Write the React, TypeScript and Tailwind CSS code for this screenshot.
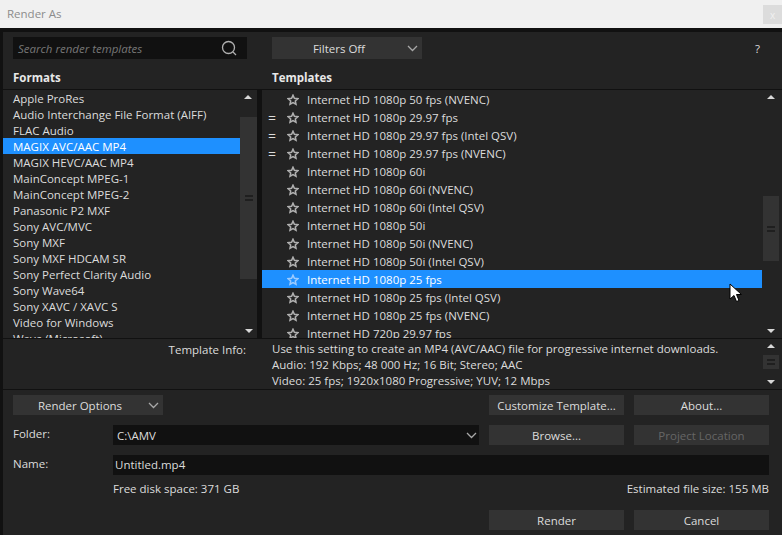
import React from 'react'

const formats = [
  'Apple ProRes',
  'Audio Interchange File Format (AIFF)',
  'FLAC Audio',
  'MAGIX AVC/AAC MP4',
  'MAGIX HEVC/AAC MP4',
  'MainConcept MPEG-1',
  'MainConcept MPEG-2',
  'Panasonic P2 MXF',
  'Sony AVC/MVC',
  'Sony MXF',
  'Sony MXF HDCAM SR',
  'Sony Perfect Clarity Audio',
  'Sony Wave64',
  'Sony XAVC / XAVC S',
  'Video for Windows',
  'Wave (Microsoft)',
]

const templates = [
  { name: 'Internet HD 1080p 50 fps (NVENC)' },
  { name: 'Internet HD 1080p 29.97 fps', eq: true },
  { name: 'Internet HD 1080p 29.97 fps (Intel QSV)', eq: true },
  { name: 'Internet HD 1080p 29.97 fps (NVENC)', eq: true },
  { name: 'Internet HD 1080p 60i' },
  { name: 'Internet HD 1080p 60i (NVENC)' },
  { name: 'Internet HD 1080p 60i (Intel QSV)' },
  { name: 'Internet HD 1080p 50i' },
  { name: 'Internet HD 1080p 50i (NVENC)' },
  { name: 'Internet HD 1080p 50i (Intel QSV)' },
  { name: 'Internet HD 1080p 25 fps', selected: true },
  { name: 'Internet HD 1080p 25 fps (Intel QSV)' },
  { name: 'Internet HD 1080p 25 fps (NVENC)' },
  { name: 'Internet HD 720p 29.97 fps' },
]

const Chevron = () => (
  <svg width="11" height="7" viewBox="0 0 11 7" fill="none" stroke="#a8a8a8" strokeWidth="1.3">
    <path d="M1 1l4.5 4.5L10 1" />
  </svg>
)

const Star = ({ color }: { color: string }) => (
  <svg width="12" height="12" viewBox="0 0 12 12" fill="none" stroke={color} strokeWidth="1.5">
    <path d="M6 1.2l1.4 3.1 3.4.4-2.5 2.2.7 3.3L6 8.5l-3 1.7.7-3.3-2.5-2.2 3.4-.4z" />
  </svg>
)

const Up = () => <div className="w-0 h-0 border-x-[4px] border-x-transparent border-b-[4px] border-b-[#d8d8d8]" />
const Down = () => <div className="w-0 h-0 border-x-[4px] border-x-transparent border-t-[4px] border-t-[#d8d8d8]" />

const Grip = () => (
  <div className="flex flex-col gap-[2px]">
    <div className="w-2 h-[2px] bg-[#1f1f1f]" />
    <div className="w-2 h-[2px] bg-[#1f1f1f]" />
  </div>
)

const Button = ({ label, disabled }: { label: string; disabled?: boolean }) => (
  <div
    className={`w-[135px] h-5 bg-[#333333] flex items-center justify-center pt-px ${disabled ? 'text-[#666666]' : 'text-[#dcdcdc]'}`}
  >
    {label}
  </div>
)

const Dropdown = ({ label }: { label: string }) => (
  <div className="w-[150px] h-5 bg-[#333333] flex items-center text-[#dcdcdc]">
    <span className="flex-1 text-center pr-px pt-px">{label}</span>
    <span className="mr-[4px] flex"><Chevron /></span>
  </div>
)

export default function App() {
  return (
    <div className="w-[782px] h-[535px] overflow-hidden flex flex-col bg-[#232323] text-[11.5px] leading-4 text-[#dcdcdc] font-['Open_Sans','Noto_Sans',sans-serif]">
      <div className="h-7 bg-[#f0f0f0] flex justify-between shrink-0">
        <span className="ml-[7px] mt-[6px] text-[#8c8c8c]">Render As</span>
        <div className="w-[19px] h-[19px] mt-[5px] bg-[#dcdcdc] text-[#f0f0f0] flex items-center justify-center text-[10px]">x</div>
      </div>
      <div className="flex-1 flex flex-col border-t-4 border-l-[3px] border-[#111111] min-h-0">
        <div className="h-[57px] shrink-0 flex flex-col">
          <div className="flex items-center mt-[5px] h-[22px]">
            <div className="ml-[10px] w-[234px] h-[22px] bg-[#111111] flex items-center justify-between pl-[5px] pr-[10px]">
              <span className="italic text-[#777777] pt-px">Search render templates</span>
              <svg width="16" height="16" viewBox="0 0 16 16" fill="none" stroke="#b0b0b0" strokeWidth="1.3">
                <circle cx="7.5" cy="7.5" r="6" />
                <path d="M12 12l3 3" />
              </svg>
            </div>
            <div className="ml-[25px] h-[22px] w-[150px] bg-[#333333] flex items-center">
              <span className="flex-1 text-center pr-px pt-px">Filters Off</span>
              <span className="mr-[4px] flex"><Chevron /></span>
            </div>
            <span className="ml-auto mr-[22px] pt-px">?</span>
          </div>
          <div className="flex font-bold text-[#e8e8e8] mt-[11px]">
            <span className="ml-[10px] w-[259px]">Formats</span>
            <span>Templates</span>
          </div>
        </div>
        <div className="h-[250px] shrink-0 flex border-t border-b border-[#111111]">
          <div className="w-[254px] flex overflow-hidden">
            <div className="w-[237px]">
              {formats.map((f) => (
                <div
                  key={f}
                  className={`h-4 pl-[10px] pt-px flex items-center whitespace-nowrap ${f === 'MAGIX AVC/AAC MP4' ? 'bg-[#1e90ff] text-white' : ''}`}
                >
                  {f}
                </div>
              ))}
            </div>
            <div className="w-[17px] flex flex-col">
              <div className="h-[27px] flex justify-center shrink-0 pt-[5px] pr-[1px]"><Up /></div>
              <div className="h-[162px] bg-[#333333] flex items-end justify-center shrink-0 pb-[78px]"><Grip /></div>
              <div className="flex-1 flex items-end justify-center pb-[5px]"><Down /></div>
            </div>
          </div>
          <div className="w-[5px] bg-[#111111]" />
          <div className="flex-1 flex overflow-hidden">
            <div className="w-[500px]">
              {templates.map((t) => (
                <div
                  key={t.name}
                  className={`h-[18px] pt-px flex items-center whitespace-nowrap ${t.selected ? 'bg-[#1e90ff] text-white' : ''}`}
                >
                  <span className="w-[25px] pl-[6px] text-[14px] leading-none">{t.eq ? '=' : ''}</span>
                  <span className="w-[20px] flex"><Star color={t.selected ? '#9ccbff' : '#b0b0b0'} /></span>
                  {t.name}
                </div>
              ))}
            </div>
            <div className="flex-1 flex flex-col pl-px pr-[3px]">
              <div className="h-[106px] flex justify-center pt-[5px] shrink-0"><Up /></div>
              <div className="h-[65px] bg-[#333333] flex items-center justify-center shrink-0"><Grip /></div>
              <div className="flex-1 flex items-end justify-center pb-[5px]"><Down /></div>
            </div>
          </div>
        </div>
        <div className="h-[51px] shrink-0 flex border-b border-[#111111]">
          <div className="w-[259px] pr-[16px] text-right pt-[3px]">Template Info:</div>
          <div className="ml-[10px] flex-1 flex flex-col pt-[2px]">
            <span>Use this setting to create an MP4 (AVC/AAC) file for progressive internet downloads.</span>
            <span>Audio: 192 Kbps; 48 000 Hz; 16 Bit; Stereo; AAC</span>
            <span>Video: 25 fps; 1920x1080 Progressive; YUV; 12 Mbps</span>
          </div>
          <div className="w-5 flex flex-col items-center pl-px pr-[3px]">
            <div className="h-[16px] pt-[5px] shrink-0"><Up /></div>
            <div className="w-4 h-[14px] bg-[#333333] flex items-center justify-center shrink-0"><Grip /></div>
            <div className="mt-[11px]"><Down /></div>
          </div>
        </div>
        <div className="flex-1 flex flex-col pl-[10px] pt-[5px] pr-[13px]">
          <div className="flex items-center justify-between">
            <Dropdown label="Render Options" />
            <div className="flex gap-[10px]">
              <Button label="Customize Template..." />
              <Button label="About..." />
            </div>
          </div>
          <div className="flex items-center mt-[10px]">
            <span className="w-[100px] pb-[2px]">Folder:</span>
            <div className="w-[366px] h-5 bg-[#111111] flex items-center justify-between pl-1 pr-[2px]">
              <span className="pt-px">C:\AMV</span>
              <Chevron />
            </div>
            <div className="flex gap-[10px] ml-auto">
              <Button label="Browse..." />
              <Button label="Project Location" disabled />
            </div>
          </div>
          <div className="flex items-center mt-[10px]">
            <span className="w-[100px] pb-[2px]">Name:</span>
            <div className="flex-1 h-5 bg-[#111111] flex items-center pl-[2px] pb-px">Untitled.mp4</div>
          </div>
          <div className="flex justify-between mt-[6px] pl-[100px]">
            <span>Free disk space: 371 GB</span>
            <span>Estimated file size: 155 MB</span>
          </div>
          <div className="flex justify-end gap-[10px] mt-[13px]">
            <Button label="Render" />
            <Button label="Cancel" />
          </div>
        </div>
      </div>
      <svg className="absolute left-[729px] top-[283px]" width="14" height="20" viewBox="0 0 14 20">
        <path d="M1 1v15l4-3.5 2.5 6 2.5-1-2.5-6h5z" fill="#ffffff" stroke="#000000" strokeWidth="1" />
      </svg>
    </div>
  )
}
